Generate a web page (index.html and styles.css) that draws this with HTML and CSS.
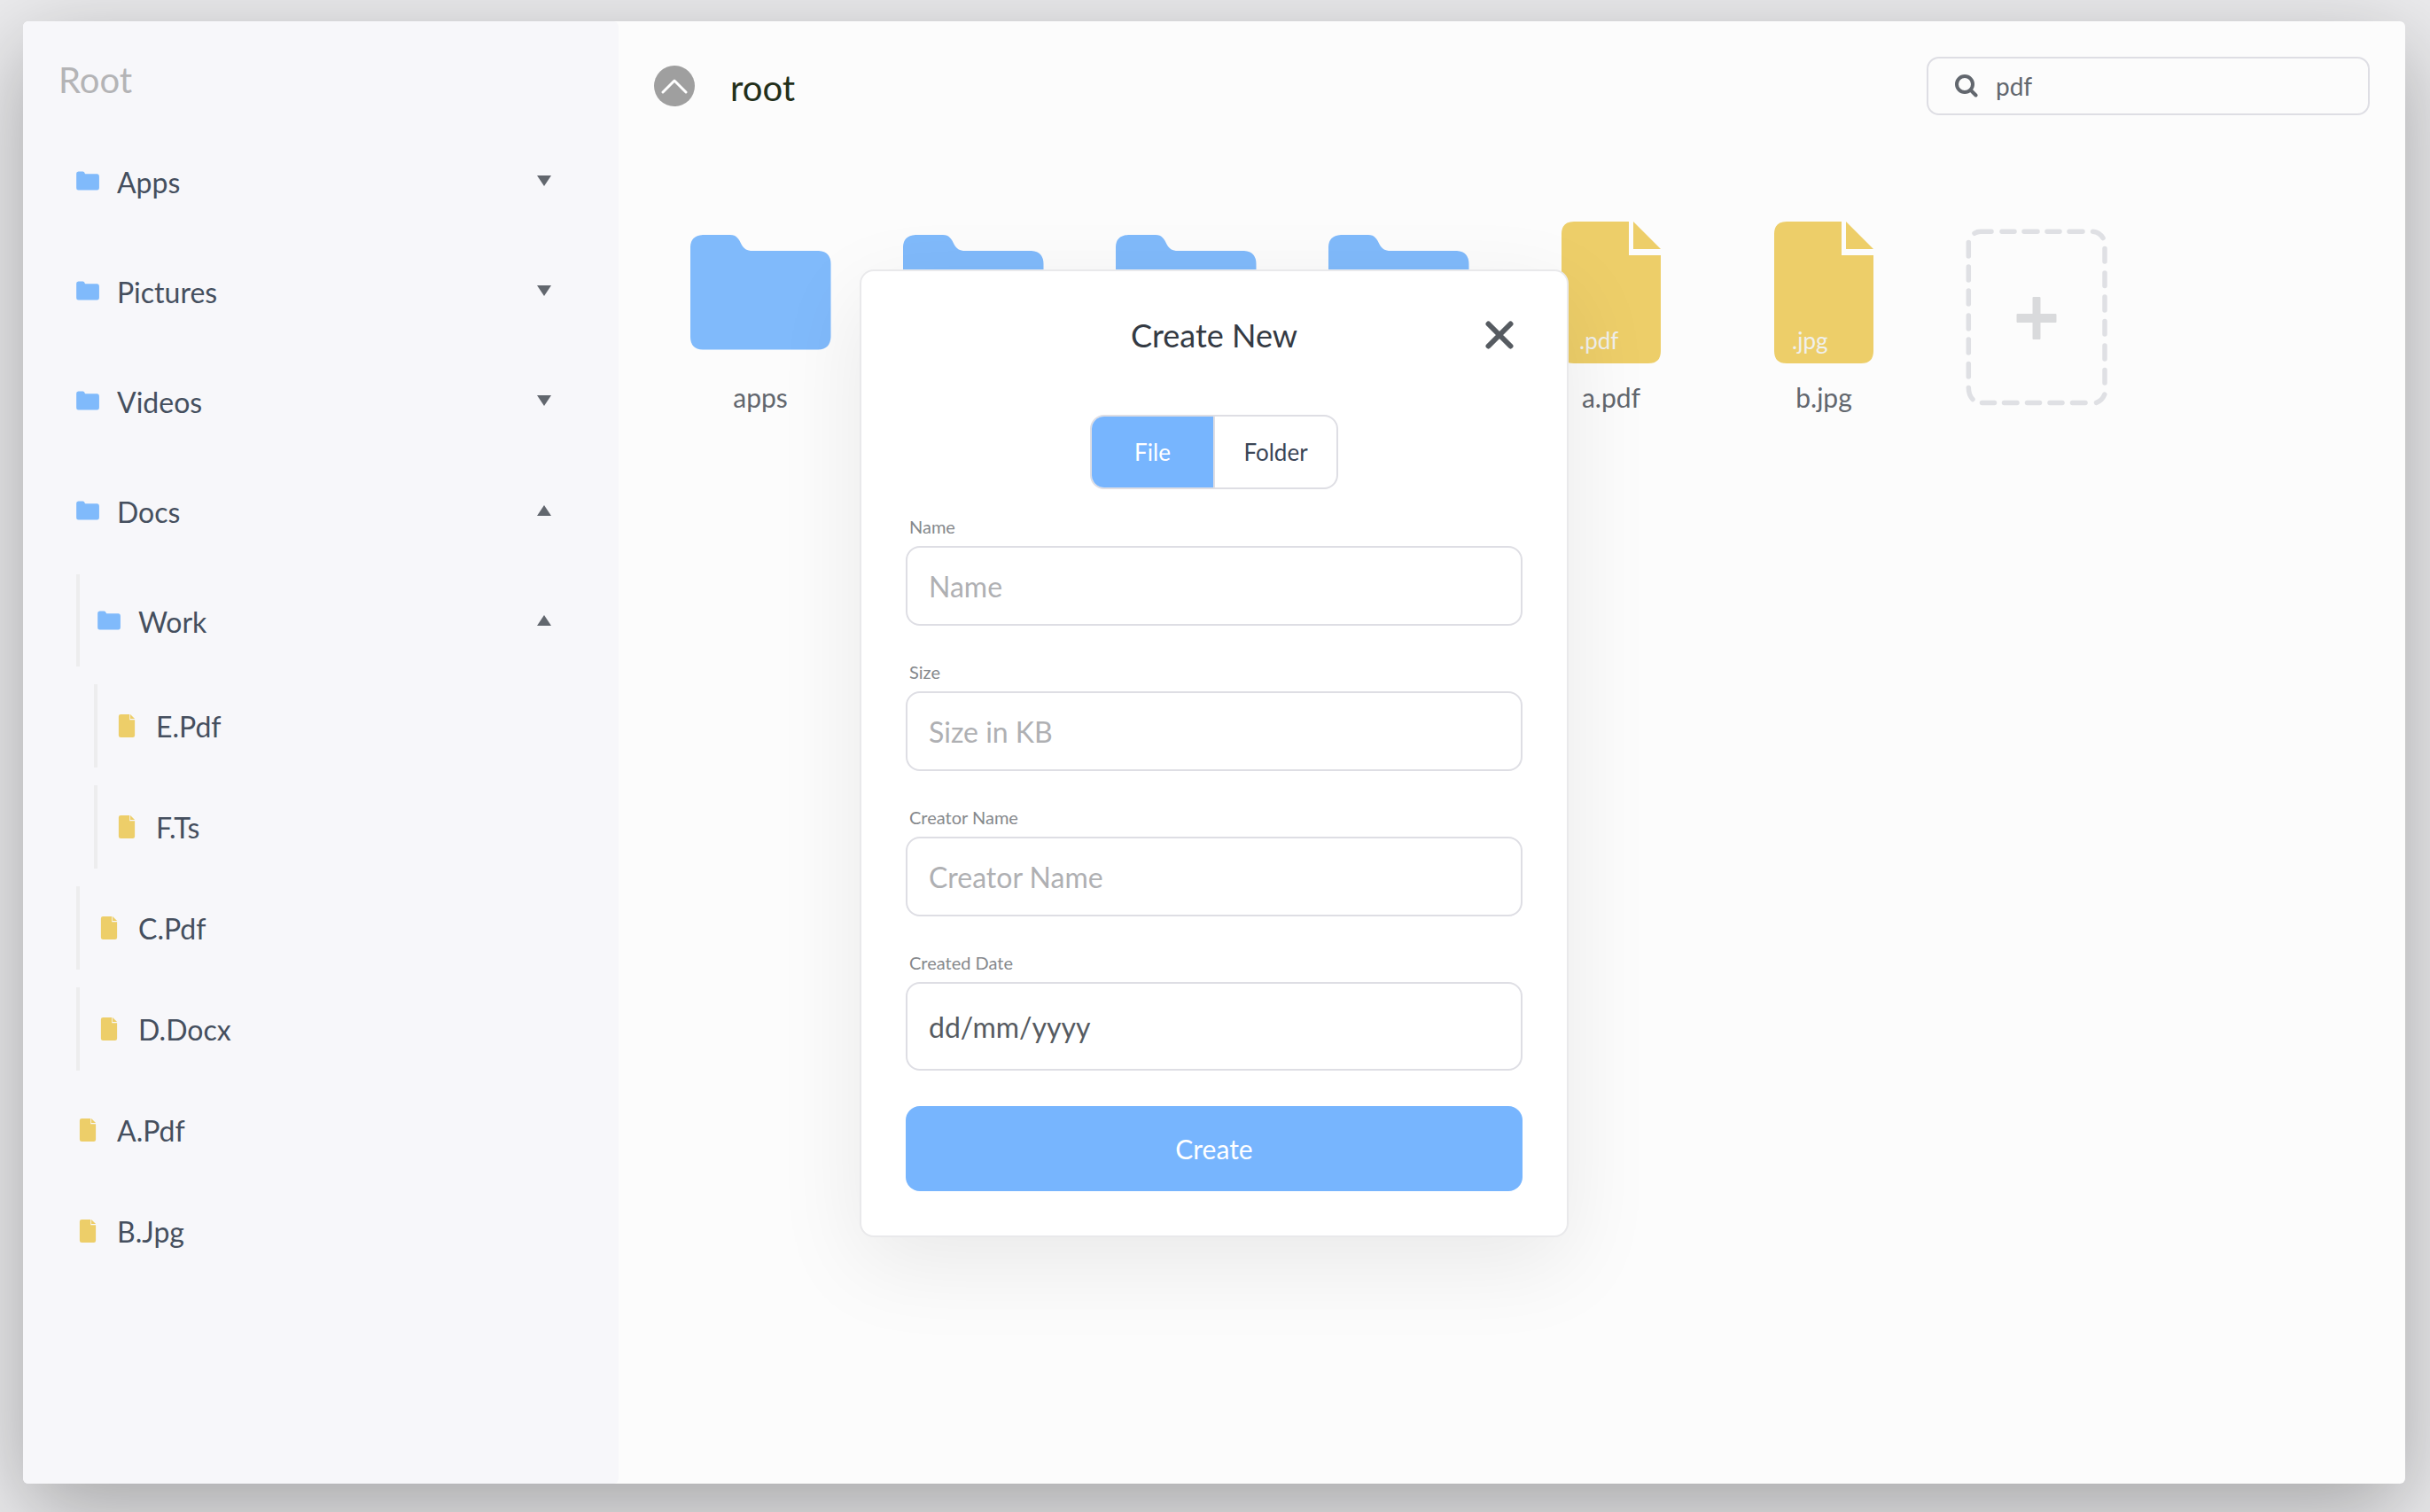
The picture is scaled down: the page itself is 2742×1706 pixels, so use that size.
FILE: index.html
```html
<!DOCTYPE html>
<html lang="en">
<head>
  <meta charset="utf-8">
  <meta name="viewport" content="width=device-width, initial-scale=1">
  <title>File Explorer</title>
  <link rel="stylesheet" href="styles.css">
</head>
<body>
  <svg class="sprite" aria-hidden="true">
    <symbol id="folder" viewBox="0 0 160 130">
      <path fill="#80bafb" d="M15 0H46C53 0 56 5 58.500 10.500C61 15.500 65 18 71 18H146Q159.500 19 159.500 33V115Q159 129 145 129.500H15Q1 129 1 115V14Q1 1 15 0Z"/>
    </symbol>
    <symbol id="file" viewBox="0 0 112 160">
      <path fill="#edce69" d="M14 0H76V38H112V146Q112 160 98 160H14Q0 160 0 146V14Q0 0 14 0Z"/>
      <path fill="#edce69" d="M81 0L112 31H81Z"/>
    </symbol>
    <symbol id="arrow-down" viewBox="0 0 16 12"><path fill="#62676e" d="M0 0H16L8 12Z"/></symbol>
    <symbol id="arrow-up" viewBox="0 0 16 12"><path fill="#62676e" d="M0 12H16L8 0Z"/></symbol>
  </svg>

  <div class="window">
    <aside class="sidebar">
      <h2 class="sidebar-title">Root</h2>
      <ul class="tree">
        <li>
          <div class="row folder-row">
            <svg class="row-icon"><use href="#folder"/></svg>
            <a class="row-name" href="#apps">Apps</a>
            <button class="toggle" type="button" aria-label="Expand Apps"><svg class="arrow"><use href="#arrow-down"/></svg></button>
          </div>
        </li>
        <li>
          <div class="row folder-row">
            <svg class="row-icon"><use href="#folder"/></svg>
            <a class="row-name" href="#pictures">Pictures</a>
            <button class="toggle" type="button" aria-label="Expand Pictures"><svg class="arrow"><use href="#arrow-down"/></svg></button>
          </div>
        </li>
        <li>
          <div class="row folder-row">
            <svg class="row-icon"><use href="#folder"/></svg>
            <a class="row-name" href="#videos">Videos</a>
            <button class="toggle" type="button" aria-label="Expand Videos"><svg class="arrow"><use href="#arrow-down"/></svg></button>
          </div>
        </li>
        <li>
          <div class="row folder-row">
            <svg class="row-icon"><use href="#folder"/></svg>
            <a class="row-name" href="#docs">Docs</a>
            <button class="toggle" type="button" aria-label="Collapse Docs"><svg class="arrow"><use href="#arrow-up"/></svg></button>
          </div>
          <ul class="branch">
            <li>
              <div class="row folder-row">
                <svg class="row-icon"><use href="#folder"/></svg>
                <a class="row-name" href="#work">Work</a>
                <button class="toggle" type="button" aria-label="Collapse Work"><svg class="arrow"><use href="#arrow-up"/></svg></button>
              </div>
              <ul class="branch branch-inner">
                <li><div class="row"><svg class="row-icon"><use href="#file"/></svg><a class="row-name" href="#e">E.Pdf</a></div></li>
                <li><div class="row"><svg class="row-icon"><use href="#file"/></svg><a class="row-name" href="#f">F.Ts</a></div></li>
              </ul>
            </li>
            <li><div class="row"><svg class="row-icon"><use href="#file"/></svg><a class="row-name" href="#c">C.Pdf</a></div></li>
            <li><div class="row"><svg class="row-icon"><use href="#file"/></svg><a class="row-name" href="#d">D.Docx</a></div></li>
          </ul>
        </li>
        <li><div class="row"><svg class="row-icon"><use href="#file"/></svg><a class="row-name" href="#a">A.Pdf</a></div></li>
        <li><div class="row"><svg class="row-icon"><use href="#file"/></svg><a class="row-name" href="#b">B.Jpg</a></div></li>
      </ul>
    </aside>

    <main class="content">
      <header class="bar">
        <button class="up" type="button" aria-label="Go up">
          <svg viewBox="0 0 46 46"><circle cx="23" cy="23" r="23" fill="#9f9f9f"/><path d="M10 30L23 17L36 30" fill="none" stroke="#fff" stroke-width="3" stroke-linecap="round" stroke-linejoin="round"/></svg>
        </button>
        <h1 class="path">root</h1>
        <label class="search">
          <svg class="search-icon" viewBox="0 0 26 26" aria-hidden="true"><circle cx="11" cy="11" r="9" fill="none" stroke="#62676e" stroke-width="4"/><path d="M18 18L23.500 23.500" stroke="#62676e" stroke-width="4" stroke-linecap="round"/></svg>
          <input class="search-input" type="text" value="pdf" aria-label="Search">
        </label>
      </header>

      <div class="grid">
        <a class="item" href="#apps"><span class="item-icon"><svg class="folder"><use href="#folder"/></svg></span><span class="item-name">apps</span></a>
        <a class="item" href="#pictures"><span class="item-icon"><svg class="folder"><use href="#folder"/></svg></span><span class="item-name">pictures</span></a>
        <a class="item" href="#videos"><span class="item-icon"><svg class="folder"><use href="#folder"/></svg></span><span class="item-name">videos</span></a>
        <a class="item" href="#docs"><span class="item-icon"><svg class="folder"><use href="#folder"/></svg></span><span class="item-name">docs</span></a>
        <a class="item" href="#a"><span class="item-icon"><svg class="file"><use href="#file"/></svg><span class="ext">.pdf</span></span><span class="item-name">a.pdf</span></a>
        <a class="item" href="#b"><span class="item-icon"><svg class="file"><use href="#file"/></svg><span class="ext">.jpg</span></span><span class="item-name">b.jpg</span></a>
        <button class="add" type="button" aria-label="Create new">
          <svg viewBox="0 0 160 200">
            <path fill="none" stroke="#dfe0e4" stroke-width="5.500" stroke-linecap="round" d="M10 5.300Q13 3.300 17 3.300H29M41 3.300H55M66 3.300H81M92 3.300H106M117 3.300H132M143.500 3.300Q151 4 155 10.500M3.300 15.500V31M3.300 43V58M3.300 70V85M3.300 98V113M3.300 125V140M3.300 152.500V167M3.300 179.500Q3.500 188 8 192.500M157 22.500V37M157 50V64.500M157 77V92M157 104.500V119M157 132V147M157 159.500V174M156.800 187Q154 194 147.500 196.300M18.500 196.500H32.500M43.500 196.500H58M69.500 196.500H83.500M95 196.500H109M120.500 196.500H135"/>
            <path fill="#d9dadc" d="M76.500 77h7q1 0 1 1v18h17q1 0 1 1v8q0 1-1 1h-17v18q0 1-1 1h-7q-1 0-1-1v-18h-17q-1 0-1-1v-8q0-1 1-1h17v-18q0-1 1-1z"/>
          </svg>
        </button>
      </div>
    </main>

    <div class="overlay">
      <form class="modal" role="dialog" aria-labelledby="modal-title">
        <div class="modal-head">
          <h2 class="modal-title" id="modal-title">Create New</h2>
          <button class="close" type="button" aria-label="Close">
            <svg viewBox="0 0 32 32"><path d="M3.500 3.500L28.500 28.500M28.500 3.500L3.500 28.500" stroke="#565b61" stroke-width="6" stroke-linecap="round"/></svg>
          </button>
        </div>
        <div class="kind">
          <button class="kind-option selected" type="button" aria-pressed="true">File</button>
          <button class="kind-option" type="button" aria-pressed="false">Folder</button>
        </div>
        <div class="field">
          <label for="name">Name</label>
          <input id="name" type="text" placeholder="Name">
        </div>
        <div class="field">
          <label for="size">Size</label>
          <input id="size" type="text" placeholder="Size in KB">
        </div>
        <div class="field">
          <label for="creator">Creator Name</label>
          <input id="creator" type="text" placeholder="Creator Name">
        </div>
        <div class="field">
          <label for="date">Created Date</label>
          <input class="date" id="date" type="text" placeholder="dd/mm/yyyy">
        </div>
        <button class="submit" type="submit">Create</button>
      </form>
    </div>
  </div>
</body>
</html>
```
FILE: styles.css
```css
* {
  box-sizing: border-box;
}

body {
  margin: 0;
  min-height: 100vh;
  padding: 24px 28px 32px 26px;
  display: flex;
  background: #ebebed;
  font-family: Lato, "Noto Sans", sans-serif;
  font-size: 32px;
  line-height: 1.2;
  color: #454f5e;
}

h1,
h2,
ul {
  margin: 0;
  padding: 0;
  font-weight: 400;
  list-style: none;
}

a {
  color: inherit;
  text-decoration: none;
}

button,
input {
  margin: 0;
  padding: 0;
  border: 0;
  background: none;
  font: inherit;
  color: inherit;
}

input {
  min-width: 0;
  outline: 0;
}

svg {
  display: block;
}

.sprite {
  position: absolute;
  width: 0;
  height: 0;
}

.window {
  position: relative;
  flex: 1;
  display: flex;
  border-radius: 6px;
  background: #fcfcfc;
  box-shadow: 0 30px 100px rgba(0, 0, 0, 0.3);
}

/* Sidebar tree */

.sidebar {
  width: 25%;
  padding: 40px;
  border-radius: 6px;
  background: #f7f7fa;
}

.sidebar-title {
  margin-bottom: 38px;
  padding-top: 2px;
  font-size: 40px;
  line-height: 48px;
  color: #b4b4b6;
}

.tree {
  padding: 0 0 0 20px;
}

.branch-inner {
  padding-left: 20px;
}

.row {
  display: flex;
  align-items: center;
  gap: 20px;
  height: 94px;
  margin-bottom: 20px;
}

.folder-row {
  height: 104px;
}

.branch .row {
  padding-left: 20px;
  border-left: 4px solid #ededee;
}

.row-icon {
  width: 26px;
  height: 26px;
}

.row-name {
  flex: 1;
  padding-top: 2px;
}

.folder-row .row-name {
  padding-top: 4px;
}

.toggle {
  padding: 10px 36px;
}

.arrow {
  width: 16px;
  height: 12px;
}

/* Main area */

.content {
  flex: 1;
  padding: 40px;
}

.bar {
  display: flex;
  align-items: center;
  gap: 40px;
  margin-bottom: 120px;
}

.up {
  width: 46px;
  height: 46px;
}

.path {
  flex: 1;
  padding-top: 4px;
  font-size: 40px;
  line-height: 48px;
  color: #232f1a;
}

.search {
  display: flex;
  align-items: center;
  gap: 20px;
  width: 500px;
  height: 66px;
  padding: 0 30px;
  border: 2px solid #dedee4;
  border-radius: 14px;
  font-size: 28px;
  color: #62676e;
}

.search-icon {
  width: 26px;
  height: 26px;
}

.search-input {
  flex: 1;
  padding-top: 2px;
}

.grid {
  display: flex;
  flex-wrap: wrap;
}

.item {
  width: 240px;
  display: flex;
  flex-direction: column;
  align-items: center;
  gap: 20px;
}

.item-icon {
  position: relative;
  display: flex;
  align-items: center;
  height: 160px;
}

.folder {
  width: 160px;
  height: 130px;
}

.file {
  width: 112px;
  height: 160px;
}

.ext {
  position: absolute;
  left: 20px;
  bottom: 10px;
  font-size: 26px;
  line-height: 32px;
  color: #f0f0ee;
}

.item-name {
  font-size: 30px;
  line-height: 36px;
  color: #62676e;
}

.add {
  width: 160px;
  height: 200px;
  margin: 8px 40px;
}

/* Create dialog */

.overlay {
  position: absolute;
  inset: 0;
  display: flex;
  align-items: center;
  justify-content: center;
  padding-top: 2px;
}

.modal {
  display: flex;
  flex-direction: column;
  width: 800px;
  padding: 50px;
  border: 2px solid #e9e9eb;
  border-radius: 16px;
  background: #fff;
  box-shadow: 0 30px 100px rgba(0, 0, 0, 0.08);
}

.modal-head {
  display: grid;
  grid-template-columns: 1fr auto 1fr;
  align-items: center;
  margin-bottom: 68px;
}

.modal-title {
  grid-column: 2;
  font-size: 36px;
  line-height: 44px;
  color: #343a43;
}

.close {
  justify-self: end;
  width: 52px;
  padding: 0 10px;
}

.kind {
  align-self: center;
  display: flex;
  width: 280px;
  height: 84px;
  margin-bottom: 30px;
  border: 2px solid #dedee4;
  border-radius: 16px;
  overflow: hidden;
}

.kind-option {
  flex: 1;
  padding-top: 2px;
  font-size: 26px;
  color: #3a4556;
}

.kind-option.selected {
  border-right: 2px solid #dedee4;
  background: #77b5fe;
  color: #fff;
}

.field {
  display: flex;
  flex-direction: column;
  gap: 10px;
  margin-bottom: 40px;
}

.field label {
  padding-left: 4px;
  font-size: 20px;
  line-height: 24px;
  color: #85888c;
}

.field input {
  height: 90px;
  padding: 0 24px;
  border: 2px solid #dedee4;
  border-radius: 16px;
}

.field input::placeholder {
  color: #afb0b3;
}

.field .date {
  height: 100px;
}

.field .date::placeholder {
  color: #565b61;
}

.submit {
  height: 96px;
  border-radius: 16px;
  background: #77b5fe;
  font-size: 30px;
  color: #fff;
}
```
